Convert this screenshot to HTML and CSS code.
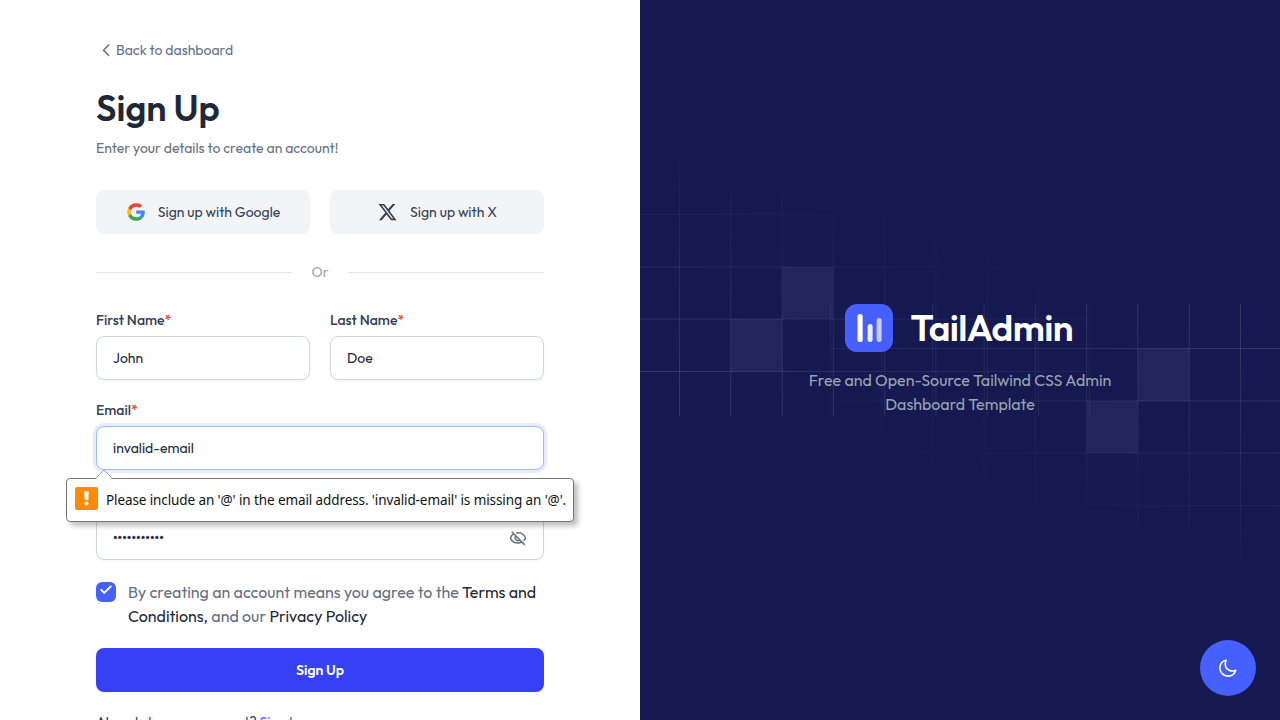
FILE: index.html
```html
<!DOCTYPE html>
<html lang="en">
<head>
<meta charset="utf-8">
<title>Sign Up | TailAdmin</title>
<link rel="stylesheet" href="styles.css">
</head>
<body>
<main class="page">
  <section class="form-side">
    <a class="back"><svg width="20" height="20" viewBox="0 0 20 20" fill="none"><path d="M12.7083 5L7.5 10.2083L12.7083 15.4167" stroke="currentColor" stroke-width="1.5" stroke-linecap="round" stroke-linejoin="round"/></svg><span>Back to dashboard</span></a>
    <h1 class="title">Sign Up</h1>
    <p class="subtitle">Enter your details to create an account!</p>
    <div class="two-col social">
      <button class="social-btn" type="button">
        <svg width="20" height="20" viewBox="0 0 20 20" fill="none"><path d="M18.7511 10.1944C18.7511 9.47495 18.6915 8.94995 18.5626 8.40552H10.1797V11.6527H15.1003C15.0011 12.4597 14.4654 13.675 13.2749 14.4916L13.2582 14.6003L15.9087 16.6126L16.0924 16.6305C17.7788 15.1041 18.7511 12.8583 18.7511 10.1944Z" fill="#4285F4"/><path d="M10.1788 18.75C12.5895 18.75 14.6133 17.9722 16.0915 16.6305L13.274 14.4916C12.5201 15.0068 11.5081 15.3666 10.1788 15.3666C7.81773 15.3666 5.81379 13.8402 5.09944 11.7305L4.99473 11.7392L2.23868 13.8295L2.20264 13.9277C3.67087 16.786 6.68674 18.75 10.1788 18.75Z" fill="#34A853"/><path d="M5.10014 11.7305C4.91165 11.186 4.80257 10.6027 4.80257 9.99992C4.80257 9.3971 4.91165 8.81379 5.09022 8.26935L5.08523 8.1534L2.29464 6.02954L2.20333 6.0721C1.5982 7.25823 1.25098 8.5902 1.25098 9.99992C1.25098 11.4096 1.5982 12.7415 2.20333 13.9277L5.10014 11.7305Z" fill="#FBBC05"/><path d="M10.1789 4.63331C11.8554 4.63331 12.9864 5.34303 13.6312 5.93612L16.1511 3.525C14.6035 2.11528 12.5895 1.25 10.1789 1.25C6.68676 1.25 3.67088 3.21387 2.20264 6.07218L5.08953 8.26943C5.81381 6.15972 7.81776 4.63331 10.1789 4.63331Z" fill="#EB4335"/></svg>
        <span>Sign up with Google</span>
      </button>
      <button class="social-btn" type="button">
        <svg width="21" height="20" viewBox="0 0 21 20" fill="currentColor"><path d="M15.6705 1.875H18.4272L12.4047 8.75833L19.4897 18.125H13.9422L9.59717 12.4442L4.62554 18.125H1.86721L8.30887 10.7625L1.51221 1.875H7.20054L11.128 7.0675L15.6705 1.875ZM14.703 16.475H16.2305L6.37054 3.43833H4.73137L14.703 16.475Z"/></svg>
        <span>Sign up with X</span>
      </button>
    </div>
    <div class="divider">Or</div>
    <form class="form" novalidate>
      <div class="two-col">
        <div class="field"><label class="label">First Name<span class="req">*</span></label><input class="input" type="text" value="John"></div>
        <div class="field"><label class="label">Last Name<span class="req">*</span></label><input class="input" type="text" value="Doe"></div>
      </div>
      <div class="field email-field">
        <label class="label">Email<span class="req">*</span></label>
        <input class="input focused" type="text" value="invalid-email">
        <div class="tooltip">
          <svg class="tip-arrow" width="18" height="10" viewBox="0 0 18 10"><path d="M1 9.5L9 1L17 9.5V10H1Z" fill="#fff"/><path d="M1 9L9 1L17 9" fill="none" stroke="#a0a0a0"/></svg>
          <svg width="23" height="23" viewBox="0 0 23 23"><rect width="23" height="23" rx="2" fill="#ff8c00"/><path d="M9.2 4.5H13.8L13.3 13H9.7Z" fill="#fff"/><circle cx="11.5" cy="16.6" r="2" fill="#fff"/></svg>
          <span class="tip-text">Please include an '@' in the email address. 'invalid-email' is missing an '@'.</span>
        </div>
      </div>
      <div class="field password-field">
        <div class="password"><input class="input dots" type="password" value="password123" aria-label="Password">
          <svg class="eye" width="20" height="20" viewBox="0 0 20 20" fill="none" stroke="currentColor" stroke-width="1.5"><path d="M6.2 5.3C4.4 6.3 3.1 7.9 2.5 10C3.6 13.2 6.5 15.1 10 15.1C11.3 15.1 12.6 14.8 13.7 14.2M8 4.9C12.5 4 16.2 6.1 17.5 10C17.1 11.2 16.5 12.2 15.6 13M7.2 8.4C6.5 10.8 8.6 13.4 11.6 12.4M3.7 3.8L16.8 16.9"/></svg>
        </div>
      </div>
      <div class="terms">
        <span class="check"><svg width="14" height="14" viewBox="0 0 14 14" fill="none"><path d="M11.6666 3.5L5.24992 9.91667L2.33325 7" stroke="#fff" stroke-width="1.94" stroke-linecap="round" stroke-linejoin="round"/></svg></span>
        <p class="terms-text">By creating an account means you agree to the <span class="dark">Terms and<br>Conditions,</span> and our <span class="dark">Privacy Policy</span></p>
      </div>
      <button class="submit" type="button">Sign Up</button>
    </form>
    <p class="signin">Already have an account? <a class="link">Sign In</a></p>
  </section>
  <section class="brand-side">
    <svg class="grid grid-top" width="450" height="254" viewBox="0 0 450 254"><use href="#grid-shape"/></svg>
    <svg class="grid grid-bottom" width="450" height="254" viewBox="0 0 450 254">
      <defs>
        <linearGradient id="fade" gradientUnits="userSpaceOnUse" x1="0" y1="254" x2="110" y2="-21"><stop stop-color="#fff" stop-opacity=".14"/><stop offset="1" stop-color="#fff" stop-opacity="0"/></linearGradient>
        <g id="grid-shape">
          <path d="M39.5 0V254M90.7 0V254M142.3 0V254M193.4 0V254M244.6 0V254M295.9 0V254M347.3 0V254M398.4 0V254M449.5 0V254M0 52.4H450M0 105H450M0 157.1H450M0 209.5H450" stroke="url(#fade)" fill="none"/>
          <path d="M142.3 105H193.4V157.1H142.3ZM91 157.1H142.3V209.5H91Z" fill="#fff" fill-opacity=".055"/>
        </g>
      </defs>
      <use href="#grid-shape"/>
    </svg>
    <div class="brand">
      <div class="logo">
        <svg width="48" height="48" viewBox="0 0 48 48"><rect width="48" height="48" rx="12" fill="#465fff"/><rect x="12.5" y="10" width="5.2" height="28" rx="2.6" fill="#fff"/><rect x="22.6" y="20" width="5" height="18" rx="2.5" fill="#fff" fill-opacity=".9"/><rect x="31.6" y="14" width="5" height="24" rx="2.5" fill="#fff" fill-opacity=".7"/></svg>
        <span class="logo-text">TailAdmin</span>
      </div>
      <p class="tagline">Free and Open-Source Tailwind CSS Admin<br>Dashboard Template</p>
    </div>
    <button class="theme" type="button" aria-label="Toggle theme"><svg width="20" height="20" viewBox="0 0 20 20" fill="none"><path d="M8.1 2.3C4.6 2.6 1.8 5.8 1.8 9.8C1.8 14.4 5.5 18.1 10 18.1C13.7 18.1 16.8 15.7 17.8 12.3C15.9 13.2 13.2 13.1 11.1 12.2C7.4 10.7 6.1 6.3 8.1 2.3Z" stroke="#fff" stroke-width="1.6" stroke-linejoin="round"/></svg></button>
  </section>
</main>
</body>
</html>
```
FILE: styles.css
```css
* { box-sizing: border-box; }
body { margin: 0; font-family: Outfit, Lato, sans-serif; font-size: 14px; line-height: 20px; color: #667085; background: #fff; }
h1, p { margin: 0; }
button, input { font: inherit; border: 0; }
svg { display: block; flex: none; }
.page { display: grid; grid-template: 720px / 1fr 1fr; height: 720px; overflow: hidden; }
.form-side { padding: 40px 96px 0; }
.back { display: flex; align-items: center; height: 20px; }
.title { margin-top: 26px; font-size: 36px; line-height: 44px; font-weight: 600; color: #1d2939; }
.subtitle { margin-top: 8px; }
.two-col { display: grid; grid-template-columns: 1fr 1fr; gap: 20px; }
.social { margin-top: 32px; }
.social-btn { display: flex; align-items: center; justify-content: center; gap: 12px; height: 44px; border-radius: 8px; background: #f2f4f7; color: #344054; white-space: nowrap; }
.divider { display: flex; align-items: center; gap: 19.5px; margin-top: 28px; color: #98a2b3; }
.divider::before, .divider::after { content: ""; flex: 1; height: 1px; background: #e4e7ec; }
.form { display: flex; flex-direction: column; gap: 20px; margin-top: 28px; }
.field { display: flex; flex-direction: column; align-items: flex-start; gap: 6px; }
.label { font-weight: 500; color: #344054; }
.req { color: #f04438; }
.input { width: 100%; height: 44px; padding: 10px 16px; border: 1px solid #d0d5dd; border-radius: 8px; background: #fff; color: #1d2939; box-shadow: 0 1px 2px rgba(16, 24, 40, .05); outline: 0; }
.focused { border-color: #9cb9ff; box-shadow: 0 0 0 3px rgba(70, 95, 255, .12); }
.email-field, .password { position: relative; }
.password-field { padding-top: 26px; }
.password { width: 100%; }
.dots { display: block; -webkit-text-stroke: .4px #1d2939; }
.eye { position: absolute; right: 16px; top: 12px; color: #667085; }
.tooltip { position: absolute; z-index: 2; left: -30px; top: 78px; display: flex; gap: 8px; width: 508px; height: 44px; padding: 8px; border: 1px solid #77787a; border-radius: 4px; background: #fff; color: #111; box-shadow: 4px 4px 5px rgba(0, 0, 0, .25); font-family: "Segoe UI", "Noto Sans", sans-serif; white-space: nowrap; }
.tip-text { font-size: 13.5px; line-height: 26px; letter-spacing: -.1px; }
.tip-arrow { position: absolute; left: 28px; top: -10px; }
.terms { display: flex; gap: 12px; font-size: 16px; line-height: 24px; }
.check { display: flex; justify-content: center; flex: none; width: 20px; height: 20px; margin-top: 2px; padding-top: 1px; border-radius: 6px; background: #465fff; }
.terms-text { white-space: nowrap; }
.dark { color: #1d2939; }
.submit { height: 44px; border-radius: 8px; background: #3641f5; color: #fff; font-weight: 600; }
.signin { margin-top: 20px; color: #344054; }
.link { color: #465fff; }
.brand-side { position: relative; display: flex; align-items: center; justify-content: center; background: #161950; }
.grid { position: absolute; }
.grid-top { left: 0; top: 162px; }
.grid-bottom { right: 0; bottom: 162px; transform: rotate(180deg); }
.brand { position: relative; display: flex; flex-direction: column; align-items: center; gap: 16px; }
.logo { display: flex; align-items: center; gap: 17px; width: 229px; height: 48px; color: #fff; }
.logo-text { font-size: 37px; line-height: 50px; font-weight: 600; letter-spacing: -.65px; }
.tagline { font-size: 16px; line-height: 24px; text-align: center; white-space: nowrap; color: #98a2b3; }
.theme { position: absolute; right: 24px; bottom: 24px; display: flex; align-items: center; justify-content: center; width: 56px; height: 56px; border-radius: 50%; background: #465fff; }
```
